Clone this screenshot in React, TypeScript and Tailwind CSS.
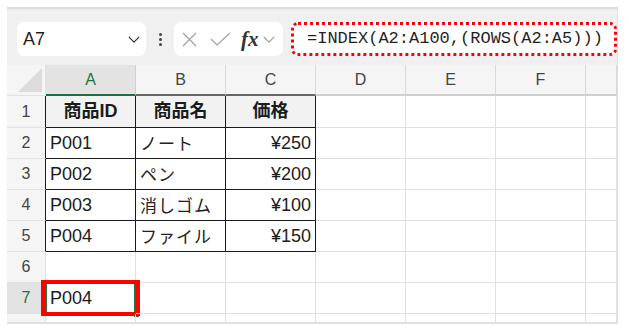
import React from "react";

const cols = ["A", "B", "C", "D", "E", "F", ""];

type Cell = { text: string; align?: "left" | "right" | "center"; bold?: boolean; jp?: boolean };

const data: Cell[][] = [
  [
    { text: "商品ID", align: "center", bold: true },
    { text: "商品名", align: "center", bold: true },
    { text: "価格", align: "center", bold: true },
  ],
  [{ text: "P001" }, { text: "ノート", jp: true }, { text: "¥250", align: "right" }],
  [{ text: "P002" }, { text: "ペン", jp: true }, { text: "¥200", align: "right" }],
  [{ text: "P003" }, { text: "消しゴム", jp: true }, { text: "¥100", align: "right" }],
  [{ text: "P004" }, { text: "ファイル", jp: true }, { text: "¥150", align: "right" }],
  [],
  [{ text: "P004" }],
];

const font = { fontFamily: '"Liberation Sans", "Noto Sans CJK JP", sans-serif' };

function Chevron({ className }: { className?: string }) {
  return (
    <svg className={className} viewBox="0 0 14 8" fill="none" stroke="currentColor" strokeWidth={1.4}>
      <path d="M1 1l6 6 6-6" />
    </svg>
  );
}

function Toolbar() {
  return (
    <div className="flex h-[56px] items-start bg-[#f0f0f0] pt-[13px] pl-[10px]">
      <div className="flex h-[34px] w-[129px] items-center justify-between rounded-[7px] bg-white pl-[6px] pr-[6px] text-[18px] text-[#1f1f1f]">
        <span>A7</span>
        <Chevron className="h-[7px] w-[12px] text-[#333]" />
      </div>
      <div className="flex h-[34px] w-[28px] flex-col items-center justify-center gap-[2px]">
        <span className="h-[3px] w-[3px] rounded-full bg-[#444]" />
        <span className="h-[3px] w-[3px] rounded-full bg-[#444]" />
        <span className="h-[3px] w-[3px] rounded-full bg-[#444]" />
      </div>
      <div className="flex h-[34px] w-[109px] items-center rounded-[7px] bg-white pl-[8px]">
        <svg className="h-[15px] w-[15px] text-[#a0a0a0]" viewBox="0 0 15 15" stroke="currentColor" strokeWidth={1.2}>
          <path d="M1 1l13 13M14 1L1 14" />
        </svg>
        <svg className="ml-[13px] h-[14px] w-[21px] text-[#a0a0a0]" viewBox="0 0 21 14" fill="none" stroke="currentColor" strokeWidth={1.2}>
          <path d="M1 7l6 6L20 1" />
        </svg>
        <span
          className="ml-[10px] text-[21px] font-bold italic leading-none text-[#333]"
          style={{ fontFamily: '"Liberation Serif", serif' }}
        >
          fx
        </span>
        <Chevron className="ml-[4px] h-[7px] w-[12px] text-[#999]" />
      </div>
      <div className="ml-[8px] flex h-[34px] flex-1 items-center rounded-[7px] border-[3px] border-dotted border-[#ff0000] bg-white pl-[13px]">
        <span
          className="text-[17px] text-[#1f1f1f]"
          style={{ fontFamily: '"Liberation Mono", monospace' }}
        >
          =INDEX(A2:A100,(ROWS(A2:A5)))
        </span>
      </div>
    </div>
  );
}

export default function App() {
  const rowHeights = [32, 31, 31, 31, 31, 31, 31, 9];
  return (
    <div className="h-[333px] w-[629px] bg-white" style={font}>
      <div className="ml-[7px] mt-[7px] w-[611px] border-t-2 border-[#dcdcdc] border-r border-r-[#e0e0e0] border-b border-b-[#e0e0e0]">
        <Toolbar />
        <div className="grid grid-cols-[39px_90px_90px_90px_90px_90px_90px_1fr]">
          <div className="relative h-[31px] border-r border-b border-[#e1e1e1] bg-[#f5f5f5]">
            <div className="absolute bottom-[3px] right-[3px] h-0 w-0 border-b-[24px] border-l-[24px] border-b-[#dcdcdc] border-l-transparent" />
          </div>
          {cols.map((c, i) => (
            <div
              key={c + i}
              className={
                "flex h-[31px] items-center justify-center text-[16px] " +
                (i === 0
                  ? "border-r border-[#d0d0d0] border-b-2 border-b-[#1e7145] bg-[#e3e3e3] text-[#1e7145]"
                  : i < 3
                  ? "border-r border-[#d9d9d9] border-b-2 border-b-[#666] bg-[#f5f5f5] text-[#444]"
                  : "border-r border-[#d9d9d9] border-b-2 border-b-[#d0d0d0] bg-[#f5f5f5] text-[#444]")
              }
            >
              {c}
            </div>
          ))}
          {rowHeights.map((h, r) => {
            const row = data[r] || [];
            const isSel = r === 6;
            return (
              <React.Fragment key={r}>
                <div
                  className={
                    "flex items-center justify-center border-b border-[#e1e1e1] text-[16px] " +
                    (r < 5 ? "border-r border-r-[#1a1a1a] " : "border-r border-r-[#e1e1e1] ") +
                    (isSel ? "bg-[#e3e3e3] text-[#1e7145]" : "bg-[#f5f5f5] text-[#444]")
                  }
                  style={{ height: h }}
                >
                  {r < 7 ? r + 1 : ""}
                </div>
                {cols.map((c, ci) => {
                  const cell = row[ci];
                  const inTable = r < 5 && ci < 3;
                  let cls = "relative flex items-center whitespace-nowrap px-[4px] text-[18px] text-[#1b1b1b] ";
                  cls += inTable ? "border-r border-b border-[#1a1a1a] " : "border-r border-b border-[#e1e1e1] ";
                  if (r === 0 && inTable) cls += "bg-[#f2f2f2] ";
                  if (cell?.align === "right") cls += "justify-end ";
                  if (cell?.align === "center") cls += "justify-center ";
                  if (cell?.bold) cls += "font-bold ";
                  return (
                    <div key={c + ci} className={cls} style={{ height: h }}>
                      {cell && (
                        <span
                          className={cell.jp ? "text-[17px] tracking-[1px] text-[#222]" : ""}
                          style={cell.jp ? { fontFamily: '"Noto Sans CJK JP", sans-serif' } : undefined}
                        >
                          {cell.text}
                        </span>
                      )}
                      {isSel && ci === 0 && (
                        <>
                          <div className="absolute -left-[1px] -top-[1px] h-[32px] w-[91px] border-2 border-[#1e7145]" />
                          <div className="absolute -right-[4px] -bottom-[4px] h-[5px] w-[5px] bg-[#1e7145]" />
                          <div className="absolute -left-[5px] -top-[3px] h-[36px] w-[99px] border-4 border-[#ff0000]" />
                        </>
                      )}
                    </div>
                  );
                })}
              </React.Fragment>
            );
          })}
        </div>
      </div>
    </div>
  );
}
